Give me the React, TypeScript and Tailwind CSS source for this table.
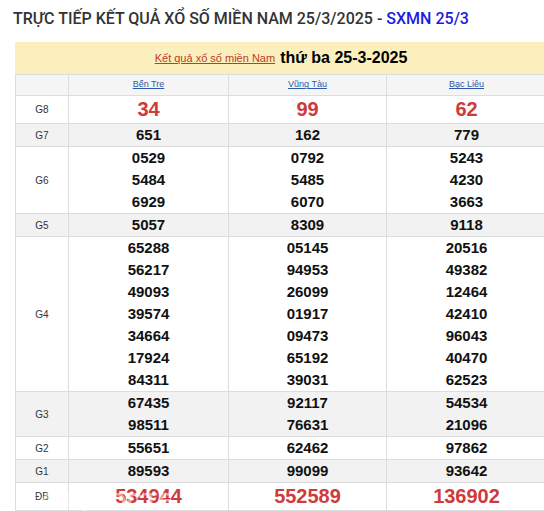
import React from "react";

type Row = {
  label: string;
  values: [string[], string[], string[]];
  big?: boolean;
  shaded?: boolean;
};

const provinces = ["Bến Tre", "Vũng Tàu", "Bạc Liêu"];

const rows: Row[] = [
  { label: "G8", values: [["34"], ["99"], ["62"]], big: true },
  { label: "G7", values: [["651"], ["162"], ["779"]], shaded: true },
  {
    label: "G6",
    values: [
      ["0529", "5484", "6929"],
      ["0792", "5485", "6070"],
      ["5243", "4230", "3663"],
    ],
  },
  { label: "G5", values: [["5057"], ["8309"], ["9118"]], shaded: true },
  {
    label: "G4",
    values: [
      ["65288", "56217", "49093", "39574", "34664", "17924", "84311"],
      ["05145", "94953", "26099", "01917", "09473", "65192", "39031"],
      ["20516", "49382", "12464", "42410", "96043", "40470", "62523"],
    ],
  },
  {
    label: "G3",
    values: [
      ["67435", "98511"],
      ["92117", "76631"],
      ["54534", "21096"],
    ],
    shaded: true,
  },
  { label: "G2", values: [["55651"], ["62462"], ["97862"]] },
  { label: "G1", values: [["89593"], ["99099"], ["93642"]], shaded: true },
  { label: "ĐB", values: [["534944"], ["552589"], ["136902"]], big: true },
];

export default function App() {
  return (
    <div className="relative h-[511px] w-[544px] overflow-hidden bg-white font-['Liberation_Sans',Arial,sans-serif]">
      <h1 className="pl-[13px] pt-[7px] font-['Roboto',sans-serif] text-[16px] font-medium leading-[24px] text-[#333]">
        TRỰC TIẾP KẾT QUẢ XỔ SỐ MIỀN NAM 25/3/2025 -{" "}
        <span className="text-[#1c1ce0]">SXMN 25/3</span>
      </h1>

      <div className="ml-[15px] mt-[11px] w-[532px]">
        <div className="flex h-[32px] items-center justify-center gap-[5px] bg-[#fbf0bd]">
          <a className="text-[11px] text-[#c0392b] underline">
            Kết quả xổ số miền Nam
          </a>
          <span className="text-[16px] font-bold text-black">thứ ba 25-3-2025</span>
        </div>

        <table className="w-full table-fixed border-collapse">
          <colgroup>
            <col className="w-[53px]" />
            <col className="w-[160px]" />
            <col className="w-[158px]" />
            <col />
          </colgroup>
          <thead>
            <tr className="h-[21px] bg-[#f5f5f5]">
              <th className="border border-[#ddd]" />
              {provinces.map((p) => (
                <th
                  key={p}
                  className="border border-[#ddd] text-[9px] font-normal text-[#2d5aa8] underline"
                >
                  {p}
                </th>
              ))}
            </tr>
          </thead>
          <tbody>
            {rows.map((r) => (
              <tr key={r.label} className={r.shaded ? "bg-[#f2f2f2]" : "bg-white"}>
                <td className="border border-[#ddd] text-center text-[10px] text-[#333]">
                  {r.label}
                </td>
                {r.values.map((col, i) => (
                  <td key={i} className="border border-[#ddd] text-center">
                    {col.map((v) =>
                      r.big ? (
                        <div
                          key={v}
                          className="text-[20px] font-bold leading-[27px] text-[#cf3a3a]"
                        >
                          {v}
                        </div>
                      ) : (
                        <div
                          key={v}
                          className="text-[15px] font-bold leading-[22px] text-[#111]"
                        >
                          {v}
                        </div>
                      ),
                    )}
                  </td>
                ))}
              </tr>
            ))}
          </tbody>
        </table>
      </div>

      <span className="pointer-events-none absolute left-[22px] top-[484px] text-[22px] font-bold tracking-[1px] text-white/50">
        BAOQUOCTE
      </span>
    </div>
  );
}
